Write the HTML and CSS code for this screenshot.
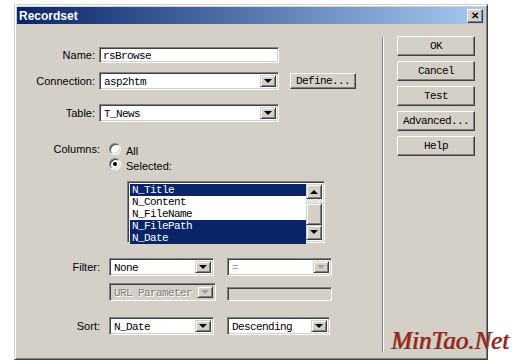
FILE: index.html
```html
<!DOCTYPE html>
<html lang="en">
<head>
    <meta charset="UTF-8">
    <title>Recordset</title>
    <link rel="stylesheet" href="styles.css">
</head>
<body>
    <div class="dialog">
        <div class="titlebar">
            <span class="title">Recordset</span>
            <span class="close">&#x2715;</span>
        </div>

        <div class="dialog-body">
            <div class="form">
                <div class="row row-name">
                    <span class="lbl">Name:</span>
                    <div class="field textbox w180">rsBrowse</div>
                </div>

                <div class="row row-conn">
                    <span class="lbl">Connection:</span>
                    <div class="field select w180">
                        <span class="value">asp2htm</span>
                        <span class="drop"><i class="tri-down"></i></span>
                    </div>
                    <div class="raised define">Define...</div>
                </div>

                <div class="row row-table">
                    <span class="lbl">Table:</span>
                    <div class="field select w180">
                        <span class="value">T_News</span>
                        <span class="drop"><i class="tri-down"></i></span>
                    </div>
                </div>

                <div class="row row-cols">
                    <span class="lbl lbl-wide">Columns:</span>
                    <span class="radio"></span>
                    <span class="radio-text">All</span>
                </div>

                <div class="row row-sel indent">
                    <span class="radio checked"></span>
                    <span class="radio-text">Selected:</span>
                </div>

                <div class="row row-list">
                    <div class="field listbox">
                        <div class="items">
                            <div class="item on">N_Title</div>
                            <div class="item">N_Content</div>
                            <div class="item">N_FileName</div>
                            <div class="item on">N_FilePath</div>
                            <div class="item on">N_Date</div>
                        </div>
                        <div class="scrollbar">
                            <span class="raised sb-btn"><i class="tri-up"></i></span>
                            <span class="sb-track sb-gap"></span>
                            <span class="raised sb-thumb"></span>
                            <span class="raised sb-btn"><i class="tri-down"></i></span>
                        </div>
                    </div>
                </div>

                <div class="row row-filter">
                    <span class="lbl lbl-wide">Filter:</span>
                    <div class="field select w105">
                        <span class="value">None</span>
                        <span class="drop"><i class="tri-down"></i></span>
                    </div>
                    <div class="field select w105 gap13 off">
                        <span class="value">=</span>
                        <span class="drop"><i class="tri-down"></i></span>
                    </div>
                </div>

                <div class="row row-url indent">
                    <div class="field select w107 disabled">
                        <span class="value">URL Parameter</span>
                        <span class="drop"><i class="tri-down"></i></span>
                    </div>
                    <div class="field textbox w105 disabled short"></div>
                </div>

                <div class="row row-sort">
                    <span class="lbl lbl-wide">Sort:</span>
                    <div class="field select w105">
                        <span class="value">N_Date</span>
                        <span class="drop"><i class="tri-down"></i></span>
                    </div>
                    <div class="field select w103 gap13">
                        <span class="value">Descending</span>
                        <span class="drop"><i class="tri-down"></i></span>
                    </div>
                </div>
            </div>

            <div class="separator"></div>

            <div class="buttons">
                <div class="raised btn">OK</div>
                <div class="raised btn">Cancel</div>
                <div class="raised btn">Test</div>
                <div class="raised btn">Advanced...</div>
                <div class="raised btn">Help</div>
            </div>
        </div>

        <div class="watermark">MinTao.Net</div>
    </div>
</body>
</html>
```

FILE: styles.css
```css
* {
    margin: 0;
    padding: 0;
    box-sizing: border-box;
}

body {
    background: #fff;
    font-family: 'Liberation Sans', Arial, sans-serif;
    font-size: 11px;
    color: #000;
}

.dialog {
    position: relative;
    width: 474px;
    height: 356px;
    margin: 4px 0 0 14px;
    padding: 2px;
    background: #d4d0c8;
    border: 1px solid;
    border-color: #d4d0c8 #404040 #404040 #d4d0c8;
    box-shadow: inset 1px 1px #fff, inset -1px -1px #808080;
}

/* title bar */
.titlebar {
    height: 17px;
    display: flex;
    align-items: center;
    justify-content: space-between;
    padding: 0 2px 0 2px;
    background: linear-gradient(to right, #0a246a, #a6caf0);
}

.title {
    color: #fff;
    font-weight: bold;
    font-size: 12px;
    padding-left: 0;
}

.close {
    width: 16px;
    height: 14px;
    display: flex;
    align-items: center;
    justify-content: center;
    font-size: 10px;
    font-weight: bold;
    line-height: 1;
    background: #d4d0c8;
    border: 1px solid;
    border-color: #fff #404040 #404040 #fff;
    box-shadow: inset -1px -1px #808080;
}

.dialog-body {
    display: flex;
    height: 331px;
}

/* form column */
.form {
    width: 365px;
    display: flex;
    flex-direction: column;
}

.row {
    display: flex;
    align-items: center;
}

.row-name { margin-top: 23px; }
.row-conn { margin-top: 9px; }
.row-table { margin-top: 14px; }
.row-cols { margin-top: 21px; height: 12px; }
.row-sel { margin-top: 3px; height: 12px; }
.row-list { margin-top: 11px; padding-left: 110px; }
.row-filter { margin-top: 15px; }
.row-url { margin-top: 7px; align-items: flex-end; }
.row-sort { margin-top: 16px; }

.indent { padding-left: 92px; }

.lbl {
    width: 78px;
    margin-right: 4px;
    text-align: right;
    white-space: nowrap;
}

.lbl-wide {
    width: 83px;
    margin-right: 9px;
}

/* sunken fields */
.field {
    background: #fff;
    border: 1px solid;
    border-color: #808080 #fff #fff #808080;
    box-shadow: inset 1px 1px #404040, inset -1px -1px #d4d0c8;
    font-family: 'Liberation Mono', 'Courier New', monospace;
    font-size: 11px;
    letter-spacing: -0.6px;
}

.textbox {
    height: 16px;
    padding: 2px 3px;
    line-height: 12px;
}

.textbox.short { height: 14px; margin-left: 11px; }

.select {
    height: 18px;
    display: flex;
    padding: 2px;
}

.select .value {
    flex: 1;
    padding-left: 2px;
    line-height: 14px;
    white-space: nowrap;
    overflow: hidden;
}

.drop {
    width: 16px;
    display: flex;
    align-items: center;
    justify-content: center;
    background: #d4d0c8;
    border: 1px solid;
    border-color: #d4d0c8 #404040 #404040 #d4d0c8;
    box-shadow: inset 1px 1px #fff, inset -1px -1px #808080;
}

.tri-down, .tri-up {
    display: block;
    width: 0;
    height: 0;
    border-left: 4px solid transparent;
    border-right: 4px solid transparent;
}

.tri-down { border-top: 4px solid #000; }
.tri-up { border-bottom: 4px solid #000; }

.off .value { color: #a0a0a0; }
.off .tri-down { border-top-color: #a0a0a0; }

.disabled { background: #d4d0c8; }
.disabled .value { color: #808080; text-shadow: 1px 1px #fff; }
.disabled .tri-down { border-top-color: #a0a0a0; }

.w180 { width: 180px; }
.w107 { width: 107px; }
.w105 { width: 105px; }
.w103 { width: 103px; }
.gap13 { margin-left: 13px; }

/* raised controls */
.raised {
    background: #d4d0c8;
    border: 1px solid;
    border-color: #fff #404040 #404040 #fff;
    box-shadow: inset -1px -1px #808080;
    font-family: 'Liberation Mono', 'Courier New', monospace;
    font-size: 11px;
    letter-spacing: -0.6px;
    display: flex;
    align-items: center;
    justify-content: center;
}

.define {
    width: 66px;
    height: 16px;
    margin-left: 11px;
}

/* radio buttons */
.radio {
    width: 12px;
    height: 12px;
    border-radius: 50%;
    background: #fff;
    border: 1px solid;
    border-color: #808080 #fff #fff #808080;
    box-shadow: inset 1px 1px #404040, inset -1px -1px #d4d0c8;
    display: flex;
    align-items: center;
    justify-content: center;
}

.radio.checked::after {
    content: "";
    width: 4px;
    height: 4px;
    border-radius: 50%;
    background: #000;
}

.radio-text {
    margin-left: 5px;
    padding-top: 4px;
}

/* listbox */
.listbox {
    width: 198px;
    height: 62px;
    display: flex;
    padding: 2px;
}

.items {
    flex: 1;
}

.item {
    height: 12px;
    line-height: 12px;
    padding-left: 2px;
}

.item.on {
    background: #0a246a;
    color: #fff;
}

.scrollbar {
    width: 16px;
    display: flex;
    flex-direction: column;
}

.sb-btn {
    height: 16px;
    border-color: #d4d0c8 #404040 #404040 #d4d0c8;
    box-shadow: inset 1px 1px #fff, inset -1px -1px #808080;
}

.sb-gap {
    height: 4px;
    background: repeating-conic-gradient(#d4d0c8 0 25%, #fff 0 50%) 0 0 / 2px 2px;
}

.sb-thumb {
    height: 22px;
    border-color: #d4d0c8 #404040 #404040 #d4d0c8;
    box-shadow: inset 1px 1px #fff, inset -1px -1px #808080;
}

/* separator and button column */
.separator {
    width: 2px;
    margin: 13px 0 3px 0;
    border-left: 1px solid #808080;
    border-right: 1px solid #fff;
}

.buttons {
    margin: 12px 0 0 13px;
    display: flex;
    flex-direction: column;
    gap: 5px;
}

.btn {
    width: 78px;
    height: 20px;
}

.watermark {
    position: absolute;
    left: 376px;
    top: 322px;
    font-family: 'Liberation Serif', 'Times New Roman', serif;
    font-style: italic;
    font-size: 25px;
    color: #8b2a1c;
    text-shadow: 1px 0 #b0503a;
    white-space: nowrap;
}
```
